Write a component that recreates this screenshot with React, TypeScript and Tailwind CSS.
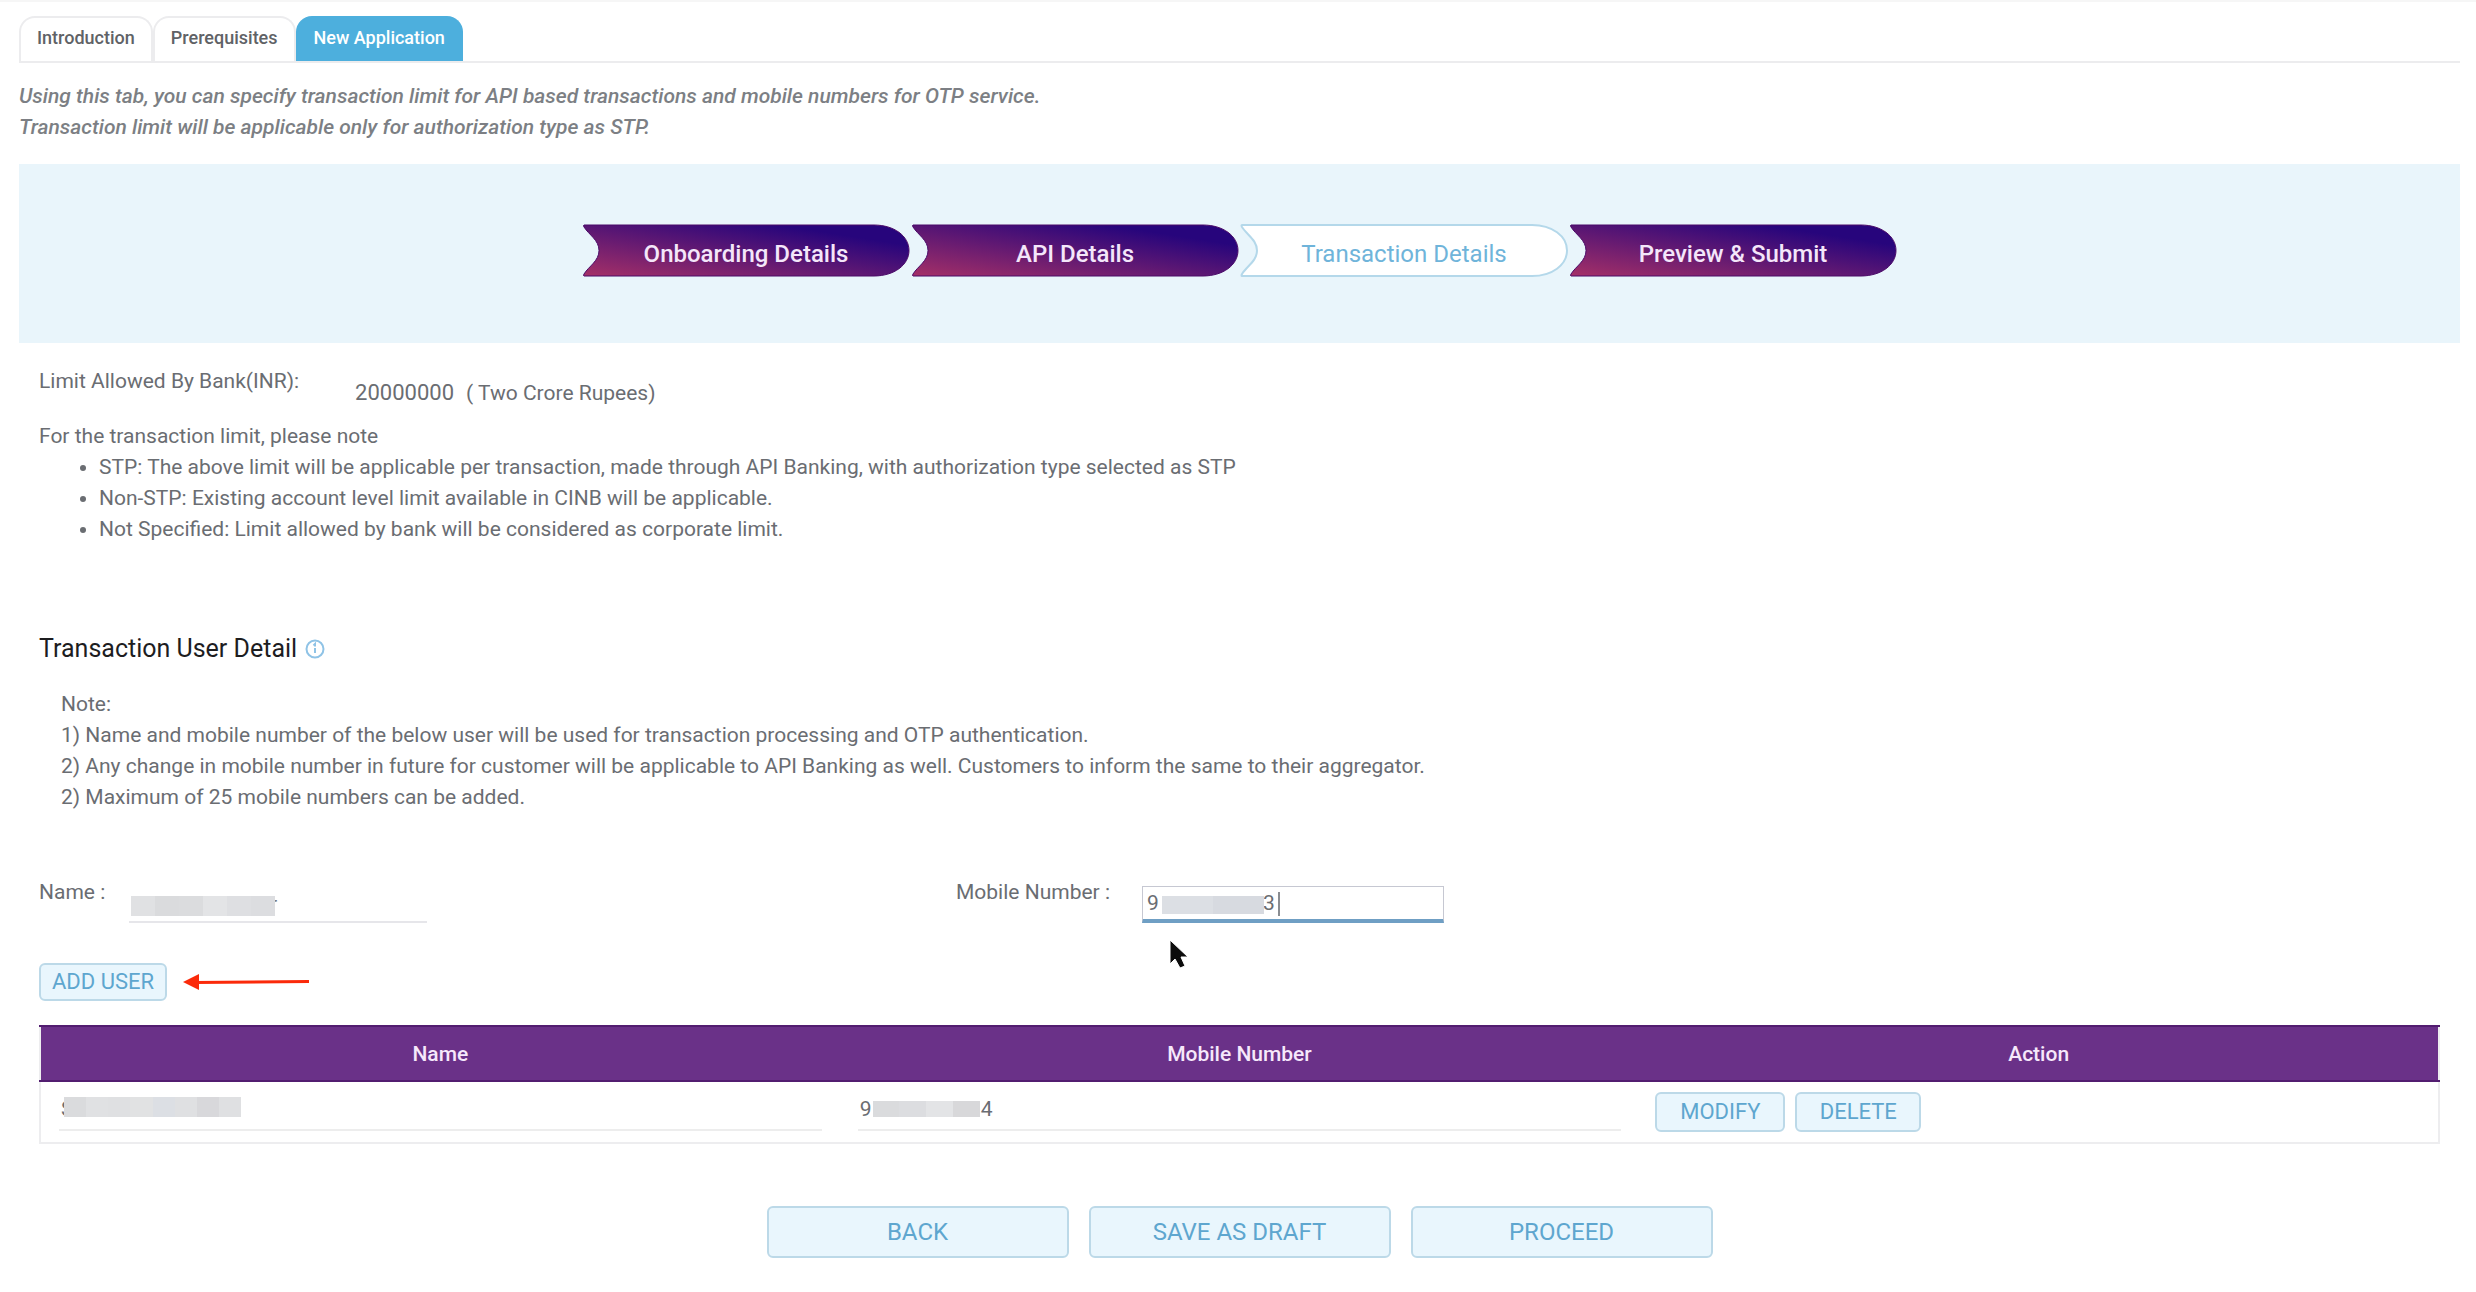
import { useState } from "react";
import clsx from "clsx";

const tabs = ["Introduction", "Prerequisites", "New Application"];

const steps = ["Onboarding Details", "API Details", "Transaction Details", "Preview & Submit"];

const limitNotes = [
    "STP: The above limit will be applicable per transaction, made through API Banking, with authorization type selected as STP",
    "Non-STP: Existing account level limit available in CINB will be applicable.",
    "Not Specified: Limit allowed by bank will be considered as corporate limit.",
];

const userNotes = [
    "1) Name and mobile number of the below user will be used for transaction processing and OTP authentication.",
    "2) Any change in mobile number in future for customer will be applicable to API Banking as well. Customers to inform the same to their aggregator.",
    "2) Maximum of 25 mobile numbers can be added.",
];

const actionButton =
    "rounded-md border-2 border-[#bcd9e8] bg-[#e9f6fd] leading-8 text-[#5ea6cf] hover:bg-[#d8eefa]";

function Step({ label, active }: { label: string; active: boolean }) {
    return (
        <li className="relative h-[53px] w-[329px]">
            <svg className="absolute inset-0 h-full w-full" viewBox="0 0 329 53" aria-hidden="true">
                <defs>
                    <linearGradient id="step" x1="0" y1="1" x2="1" y2="0">
                        <stop offset="0" stopColor="#a53067" />
                        <stop offset="0.8" stopColor="#27057c" />
                        <stop offset="1" stopColor="#27057c" />
                    </linearGradient>
                </defs>
                <path
                    d="M2 1 H292 C312 1 327 12 327 26.5 C327 41 312 52 292 52 H2 Q1 52 2 50 C7 42 17 37 17 26.5 C17 16 7 11 2 3 Q1 1 2 1 Z"
                    fill={active ? "#ffffff" : "url(#step)"}
                    stroke={active ? "#b4d8ea" : "#4b0b69"}
                    strokeWidth={active ? 2 : 1}
                />
            </svg>
            <span
                className={clsx(
                    "relative flex h-full items-center justify-center pt-1.5 text-2xl",
                    active ? "text-[#6fb4da]" : "font-medium text-[#f4e6fa]"
                )}
            >
                {label}
            </span>
        </li>
    );
}

// Grey blocks laid over the private part of a value
function Mask({ className, shades }: { className: string; shades: string[] }) {
    return (
        <span className={clsx("absolute flex", className)}>
            {shades.map((shade, index) => (
                <span key={index} className={clsx("h-full flex-1", shade)} />
            ))}
        </span>
    );
}

export default function App() {
    const [activeTab, setActiveTab] = useState("New Application");

    return (
        <main className="border-t-2 border-[#f6f6f6] bg-white pt-3.5 pr-4 pl-[19px] font-['Roboto',sans-serif] text-[21px] leading-7 text-[#6a6d72]">
            <nav className="flex border-b-2 border-[#ececee]">
                {tabs.map((tab) => (
                    <button
                        key={tab}
                        type="button"
                        onClick={() => setActiveTab(tab)}
                        className={clsx(
                            "h-[45px] rounded-t-2xl border-2 border-b-0 px-4 pb-1 text-lg font-medium",
                            activeTab === tab
                                ? "border-[#4dafdd] bg-[#4dafdd] text-white"
                                : "border-[#ececee] bg-white text-[#606266]"
                        )}
                    >
                        {tab}
                    </button>
                ))}
            </nav>

            <p className="mt-[18px] leading-[31px] font-medium text-[#7c7f84] italic">
                Using this tab, you can specify transaction limit for API based transactions and mobile numbers for OTP service.
                <br />
                Transaction limit will be applicable only for authorization type as STP.
            </p>

            <section className="mt-[21px] bg-[#e9f5fb] pt-[60px] pb-[66px]">
                <ol className="flex justify-center">
                    {steps.map((step) => (
                        <Step key={step} label={step} active={step === "Transaction Details"} />
                    ))}
                </ol>
            </section>

            <div className="px-5">
                <dl className="mt-5 flex gap-14">
                    <dt className="pt-1">Limit Allowed By Bank(INR):</dt>
                    <dd className="pt-4">
                        <span className="text-[22px]">20000000</span>
                        <span className="ml-3">( Two Crore Rupees)</span>
                    </dd>
                </dl>

                <section className="mt-3.5 leading-[31px]">
                    <p>For the transaction limit, please note</p>
                    <ul className="list-disc pl-[60px]">
                        {limitNotes.map((note) => (
                            <li key={note}>{note}</li>
                        ))}
                    </ul>
                </section>

                <h2 className="mt-[88px] flex items-center gap-2 text-[25px] leading-8 text-[#1d1d1f]">
                    Transaction User Detail
                    <svg className="h-5 w-5" viewBox="0 0 20 20" fill="none" stroke="#8fc3e6" strokeWidth="2" aria-hidden="true">
                        <circle cx="10" cy="10" r="8.5" />
                        <path d="M10 9v5M8.5 6.5L10 5v2.5" />
                    </svg>
                </h2>

                <section className="mt-6 pl-[22px] leading-[31px]">
                    <p>Note:</p>
                    {userNotes.map((note) => (
                        <p key={note}>{note}</p>
                    ))}
                </section>

                <form className="mt-[65px]" onSubmit={(event) => event.preventDefault()}>
                    <div className="flex">
                        <div className="flex w-[917px] gap-6">
                            <label htmlFor="name">Name :</label>
                            <div className="relative mt-2">
                                <input
                                    id="name"
                                    defaultValue={"\u00a0".repeat(27) + "r"}
                                    className="block h-[37px] w-[298px] border-b-2 border-[#e6e6ea] outline-none"
                                />
                                <Mask
                                    className="top-2.5 left-0.5 h-5 w-[144px]"
                                    shades={["bg-[#e0e1e3]", "bg-[#dadbdd]", "bg-[#dbdcde]", "bg-[#e3e4e6]", "bg-[#dedfe2]", "bg-[#dcdde0]"]}
                                />
                            </div>
                        </div>
                        <div className="flex gap-8">
                            <label htmlFor="mobile">Mobile Number :</label>
                            <div className="relative mt-2">
                                <input
                                    id="mobile"
                                    defaultValue={"9" + "\u00a0".repeat(20) + "3"}
                                    className="block h-[37px] w-[302px] border border-b-4 border-[#c6c8d2] border-b-[#6f9fc4] px-1 outline-none"
                                />
                                <Mask className="top-2.5 left-5 h-[18px] w-[102px]" shades={["bg-[#dcdfe4]", "bg-[#d7dae0]"]} />
                                <span className="absolute top-1.5 left-[136px] h-6 w-0.5 bg-[#8a8d92]" />
                                <svg className="absolute top-[52px] left-6 h-10 w-8" viewBox="0 0 32 40" aria-hidden="true">
                                    <path
                                        d="M4 2v24l5-5 5 9 5-2-4-9h7z"
                                        fill="#0c0c0c"
                                        stroke="#ffffff"
                                        strokeWidth="1"
                                    />
                                </svg>
                            </div>
                        </div>
                    </div>

                    <div className="mt-10 flex items-center gap-4">
                        <button type="submit" className={clsx(actionButton, "h-[38px] w-[128px] text-[22px]")}>
                            ADD USER
                        </button>
                        <svg className="h-4 w-[126px]" viewBox="0 0 126 16" aria-hidden="true">
                            <path d="M12 8.5L126 7.5" stroke="#fb2a0a" strokeWidth="3" />
                            <path d="M0 8L16 0V16Z" fill="#fb2a0a" />
                        </svg>
                    </div>
                </form>

                <table className="mt-6 w-full table-fixed border-2 border-t-0 border-[#ededef]">
                    <thead>
                        <tr className="h-[55px] bg-[#6a3188] text-[#f6e8fb]">
                            <th className="border-y-2 border-[#521d70] font-medium">Name</th>
                            <th className="border-y-2 border-[#521d70] font-medium">Mobile Number</th>
                            <th className="border-y-2 border-[#521d70] font-medium">Action</th>
                        </tr>
                    </thead>
                    <tbody>
                        <tr className="h-[62px]">
                            <td className="px-[18px]">
                                <div className="relative">
                                    <input
                                        aria-label="User name"
                                        defaultValue="S"
                                        className="block h-[38px] w-full border-b-2 border-[#ededed] px-0.5 pb-1 outline-none"
                                    />
                                    <Mask
                                        className="top-1 left-[5px] h-5 w-[177px]"
                                        shades={["bg-[#dadbdd]", "bg-[#e0e1e3]", "bg-[#dfe0e2]", "bg-[#e1e2e3]", "bg-[#dcdfe4]", "bg-[#dfe0e2]", "bg-[#d8d8db]", "bg-[#dfe0e2]"]}
                                    />
                                </div>
                            </td>
                            <td className="px-[18px]">
                                <div className="relative">
                                    <input
                                        aria-label="User mobile number"
                                        defaultValue={"9" + "\u00a0".repeat(21) + "4"}
                                        className="block h-[38px] w-full border-b-2 border-[#ededed] px-0.5 pb-1 outline-none"
                                    />
                                    <Mask
                                        className="top-2 left-[15px] h-4 w-[107px]"
                                        shades={["bg-[#dadbdd]", "bg-[#dcdde0]", "bg-[#e3e4e6]", "bg-[#d8d8da]"]}
                                    />
                                </div>
                            </td>
                            <td className="px-4">
                                <div className="flex gap-2.5">
                                    <button type="button" className={clsx(actionButton, "h-10 w-[130px] text-[22px]")}>
                                        MODIFY
                                    </button>
                                    <button type="button" className={clsx(actionButton, "h-10 w-[126px] text-[22px]")}>
                                        DELETE
                                    </button>
                                </div>
                            </td>
                        </tr>
                    </tbody>
                </table>

                <div className="mt-[62px] mb-8 flex justify-center gap-5">
                    {["BACK", "SAVE AS DRAFT", "PROCEED"].map((label) => (
                        <button key={label} type="button" className={clsx(actionButton, "h-[52px] w-[302px] text-2xl")}>
                            {label}
                        </button>
                    ))}
                </div>
            </div>
        </main>
    );
}
